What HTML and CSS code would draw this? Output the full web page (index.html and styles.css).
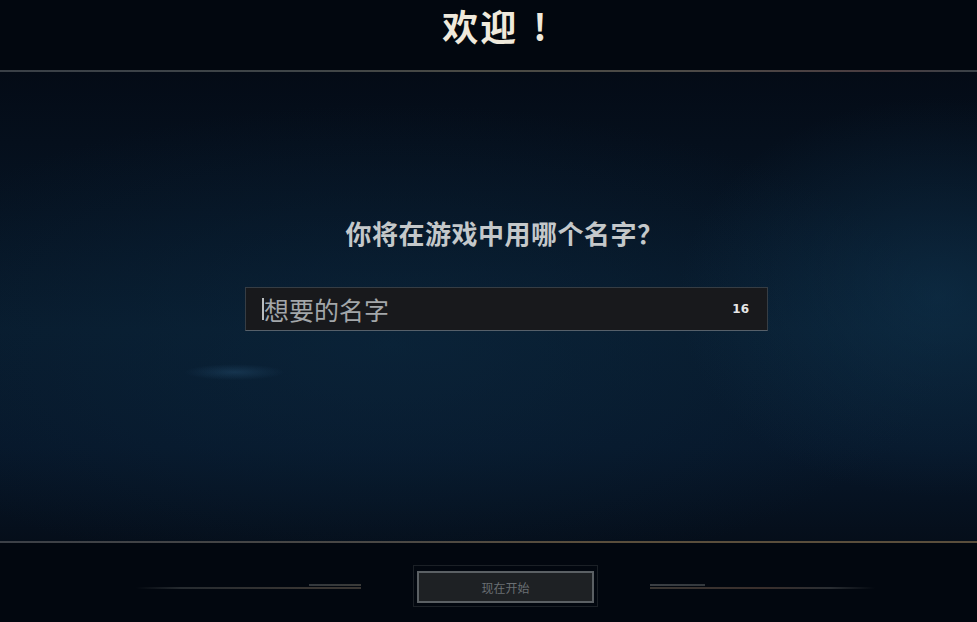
FILE: index.html
```html
<!DOCTYPE html>
<html lang="zh-CN">
<head>
  <meta charset="UTF-8">
  <meta name="viewport" content="width=device-width, initial-scale=1.0">
  <link rel="stylesheet" href="styles.css">
</head>
<body>
  <div class="header">
    <h1 class="title">欢迎<span class="bang">!</span></h1>
  </div>
  <div class="rule rule-top"></div>

  <div class="content">
    <h2 class="question">你将在游戏中用哪个名字？</h2>
    <div class="name-box">
      <span class="caret"></span>
      <span class="placeholder">想要的名字</span>
      <span class="counter">16</span>
    </div>
  </div>

  <div class="rule rule-bottom"></div>
  <div class="footer">
    <div class="deco deco-left"></div>
    <div class="btn-frame">
      <button class="start-btn">现在开始</button>
    </div>
    <div class="deco deco-right"></div>
  </div>
</body>
</html>
```

FILE: styles.css
```css
* {
  box-sizing: border-box;
}

body {
  margin: 0;
  padding: 0;
  height: 100vh;
  overflow: hidden;
  display: flex;
  flex-direction: column;
  background-color: #02070f;
  font-family: "Noto Sans CJK SC", "Noto Sans", sans-serif;
}

.header {
  height: 70px;
  display: flex;
  justify-content: center;
  align-items: flex-start;
  padding-left: 14px;
  background-color: #02070f;
}

.title {
  margin: 2px 0 0 0;
  font-size: 36px;
  font-weight: 700;
  color: #efe9dc;
  letter-spacing: 2px;
  line-height: 46px;
}

.bang {
  margin-left: 15px;
}

.rule {
  height: 2px;
  flex-shrink: 0;
}

.rule-top {
  background: linear-gradient(90deg, #3a4047 0%, #3f4548 30%, #4a4a44 50%, #4c4a47 70%, #4a3c40 90%, #3a4248 100%);
}

.rule-bottom {
  background: linear-gradient(90deg, #3c4047 0%, #4a4845 40%, #5a4e3c 60%, #5a4e3c 100%);
}

.content {
  flex: 1;
  display: flex;
  flex-direction: column;
  align-items: center;
  padding-top: 142px;
  background:
    radial-gradient(ellipse 50px 8px at 24% 64%, rgba(50, 100, 140, 0.3), transparent),
    radial-gradient(ellipse 260px 200px at 96% 48%, rgba(18, 60, 90, 0.45), transparent),
    radial-gradient(ellipse 560px 240px at 40% 58%, rgba(12, 42, 66, 0.5), transparent),
    linear-gradient(180deg, #040b16 0%, #061322 30%, #081b2d 55%, #07172a 80%, #050e1a 100%);
}

.question {
  margin: 0 0 0 32px;
  font-size: 26px;
  font-weight: 700;
  color: #c4c8ca;
  letter-spacing: 0.5px;
  line-height: 38px;
}

.name-box {
  margin-top: 35px;
  margin-left: 36px;
  width: 523px;
  height: 44px;
  display: flex;
  align-items: center;
  padding: 0 18px 0 16px;
  background-color: #18191c;
  border: 1px solid #363d44;
  border-bottom-color: #56606a;
}

.caret {
  width: 2px;
  height: 22px;
  background-color: #b9bdbf;
}

.placeholder {
  flex: 1;
  font-size: 25px;
  color: #a3a7aa;
  line-height: 30px;
}

.counter {
  font-family: "DejaVu Sans", sans-serif;
  font-size: 12px;
  font-weight: 700;
  color: #e6e6e6;
}

.footer {
  height: 79px;
  display: flex;
  justify-content: center;
  align-items: center;
  gap: 52px;
  padding-left: 34px;
  padding-top: 7px;
  background-color: #02070f;
}

.deco {
  width: 225px;
  height: 5px;
}

.deco-left {
  background:
    linear-gradient(90deg, #33383d, #3a3a38) right top / 52px 2px no-repeat,
    linear-gradient(90deg, transparent, #262b30 20%, #3a3633 80%, #3a3633) left bottom / 100% 2px no-repeat;
}

.deco-right {
  background:
    linear-gradient(90deg, #3b3f44, #33383d) left top / 55px 2px no-repeat,
    linear-gradient(90deg, #3a3633, #3a2f2c 50%, #2a2e33 80%, transparent) left bottom / 100% 2px no-repeat;
}

.btn-frame {
  padding: 5px 3px 3px 3px;
  border: 1px solid #1b2026;
}

.start-btn {
  width: 177px;
  height: 32px;
  background-color: #1e2124;
  border: 2px solid #5b6064;
  color: #6a6f73;
  font-family: "Noto Sans CJK SC", sans-serif;
  font-size: 12px;
  padding: 0;
}
```
